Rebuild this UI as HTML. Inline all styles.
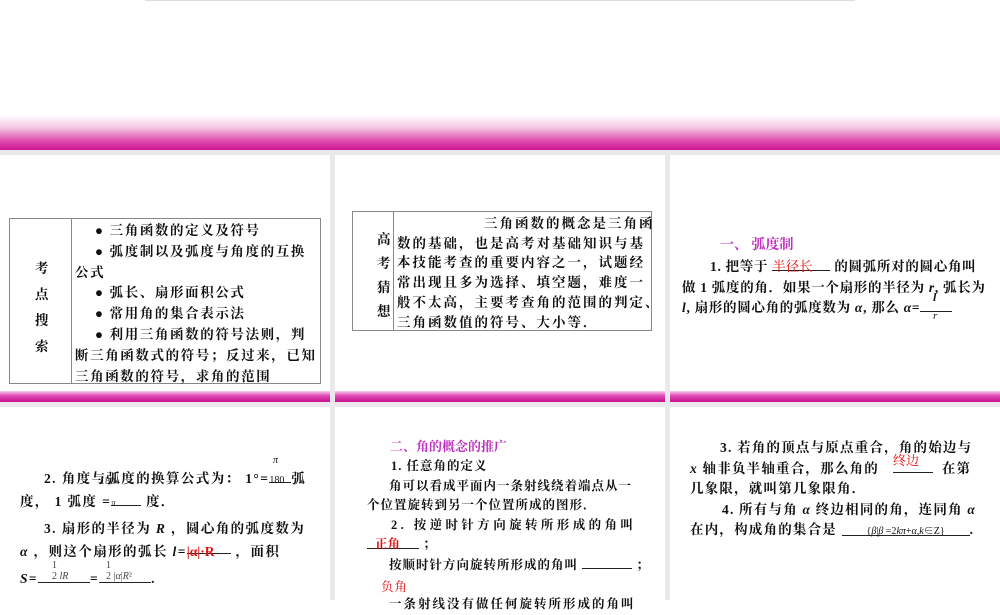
<!DOCTYPE html>
<html><head><meta charset="utf-8"><style>
*{margin:0;padding:0;box-sizing:border-box}
body{width:1000px;height:600px;position:relative;overflow:hidden;background:#fff;font-family:"Liberation Serif","Noto Serif CJK SC",serif;color:#111}
.a{position:absolute;white-space:nowrap}
.t{font-size:13.5px}
.b{font-weight:bold}
.r{color:#e01010}
.m{color:#c030c0;font-weight:bold}
.u{display:inline-block;border-bottom:1px solid #222;height:14px;vertical-align:baseline;letter-spacing:0}
</style></head><body>
<div class="a" style="left:145px;top:0;width:710px;height:1px;background:#ddd"></div>
<div class="a" style="left:0;top:115px;width:1000px;height:36px;background:linear-gradient(#fff,#f4c8e4 35%,#e050b0 70%,#c8108e)"></div>
<div class="a" style="left:0;top:150px;width:1000px;height:5px;background:#ebe8eb"></div>
<div class="a" style="left:0;top:391px;width:1000px;height:11px;background:linear-gradient(#f8d0ec,#e050b8 40%,#c8108e)"></div>
<div class="a" style="left:0;top:402px;width:1000px;height:5px;background:#ebe8eb"></div>
<div class="a" style="left:330px;top:155px;width:5px;height:445px;background:#ebe8eb"></div>
<div class="a" style="left:665px;top:155px;width:5px;height:445px;background:#ebe8eb"></div>

<!-- panel 1 -->
<div class="a" style="left:9px;top:218px;width:312px;height:166px;border:1px solid #888"></div>
<div class="a" style="left:71px;top:218px;width:1px;height:166px;background:#888"></div>
<div class="a t b" style="left:35px;top:256px;line-height:26px;white-space:normal;width:16px">考<br>点<br>搜<br>索</div>
<div class="a t" style="left:75px;top:221px;line-height:20.8px;letter-spacing:1.6px;font-weight:bold">
<div>&nbsp;&nbsp;&nbsp;&nbsp;● 三角函数的定义及符号</div>
<div>&nbsp;&nbsp;&nbsp;&nbsp;● 弧度制以及弧度与角度的互换</div>
<div>公式</div>
<div>&nbsp;&nbsp;&nbsp;&nbsp;● 弧长、扇形面积公式</div>
<div>&nbsp;&nbsp;&nbsp;&nbsp;● 常用角的集合表示法</div>
<div>&nbsp;&nbsp;&nbsp;&nbsp;● 利用三角函数的符号法则，判</div>
<div>断三角函数式的符号；反过来，已知</div>
<div>三角函数的符号，求角的范围</div>
</div>

<!-- panel 2 -->
<div class="a" style="left:352px;top:211px;width:300px;height:120px;border:1px solid #888"></div>
<div class="a" style="left:393px;top:211px;width:1px;height:120px;background:#888"></div>
<div class="a t b" style="left:377px;top:228px;line-height:24px;white-space:normal;width:16px">高<br>考<br>猜<br>想</div>
<div class="a t b" style="left:397px;top:214px;line-height:19.7px;letter-spacing:2px">
<div style="padding-left:87px">三角函数的概念是三角函</div>
<div>数的基础，也是高考对基础知识与基</div>
<div>本技能考查的重要内容之一，试题经</div>
<div>常出现且多为选择、填空题，难度一</div>
<div>般不太高，主要考查角的范围的判定、</div>
<div>三角函数值的符号、大小等．</div>
</div>

<!-- panel 3 -->
<div class="a m" style="left:720px;top:234px;font-size:14px">一、 弧度制</div>
<div class="a t b" style="left:682px;top:257px;line-height:20.5px;letter-spacing:0.7px">
<div style="padding-left:28px">1. 把等于 <span class="u r" style="width:58px;font-weight:normal">半径长</span> 的圆弧所对的圆心角叫</div>
<div>做 1 弧度的角．如果一个扇形的半径为 <i>r</i>, 弧长为</div>
<div><i>l</i>, 扇形的圆心角的弧度数为 <i>α</i>, 那么 <i>α</i>=<span class="u" style="width:32px"></span></div>
</div>
<div class="a" style="left:933px;top:290px;font-size:12px;font-style:italic;font-weight:bold">l</div>
<div class="a" style="left:933px;top:310px;font-size:11px;font-style:italic">r</div>

<!-- panel 4 -->
<div class="a" style="left:273px;top:455px;font-size:10px;font-style:italic">π</div>
<div class="a" style="left:100px;top:476px;font-size:10px;color:#444">180</div>
<div class="a t b" style="left:20px;top:467px;line-height:23px;letter-spacing:1.4px">
<div style="padding-left:24px">2. 角度与弧度的换算公式为： 1°=<span class="u" style="width:22px;font-weight:normal;font-size:10px">180</span>弧</div>
<div>度， 1 弧度 =<span class="u" style="width:30px;font-weight:normal;font-size:9px"><i>π</i></span> 度．</div>
<div style="margin-top:4px;padding-left:24px">3. 扇形的半径为 <i>R</i> ，圆心角的弧度数为</div>
<div><i>α</i> ，则这个扇形的弧长 <i>l</i>=<span class="u r" style="width:44px">|α|·R</span> ，面积</div>
<div style="margin-top:4px"><i>S</i>=<span class="u" style="width:52px"></span>=<span class="u" style="width:52px"></span>.</div>
</div>
<div class="a" style="left:52px;top:560px;font-size:10px;color:#444;line-height:11px">1<br>2 <i>lR</i></div>
<div class="a" style="left:106px;top:560px;font-size:10px;color:#444;line-height:11px">1<br>2 |<i>α</i>|<i>R</i>²</div>

<!-- panel 5 -->
<div class="a m" style="left:390px;top:436px;font-size:13px">二、角的概念的推广</div>
<div class="a" style="left:367px;top:457px;font-size:12.5px;line-height:19.6px;font-weight:bold;letter-spacing:1px">
<div style="padding-left:24px">1. 任意角的定义</div>
<div style="padding-left:22px">角可以看成平面内一条射线绕着端点从一</div>
<div>个位置旋转到另一个位置所成的图形．</div>
<div style="padding-left:24px;letter-spacing:3.4px">2. 按逆时针方向旋转所形成的角叫</div>
<div><span class="u r" style="width:52px;padding-left:8px">正角</span> ；</div>
<div style="padding-left:22px">按顺时针方向旋转所形成的角叫 <span class="u" style="width:50px"></span> ；</div>
<div class="r" style="font-weight:normal;padding-left:14px;margin-top:2px">负角</div>
<div style="padding-left:22px;margin-top:-2px;letter-spacing:2px">一条射线没有做任何旋转所形成的角叫</div>
</div>

<!-- panel 6 -->
<div class="a r" style="left:893px;top:450px;font-size:13px">终边</div>
<div class="a t b" style="left:690px;top:438px;line-height:20.5px;letter-spacing:1.2px">
<div style="padding-left:30px">3. 若角的顶点与原点重合，角的始边与</div>
<div><i>x</i> 轴非负半轴重合，那么角的 &nbsp;&nbsp;<span class="u" style="width:40px"></span>&nbsp; 在第</div>
<div>几象限，就叫第几象限角．</div>
<div style="padding-left:32px">4. 所有与角 <i>α</i> 终边相同的角，连同角 <i>α</i></div>
<div>在内，构成角的集合是 <span class="u" style="width:128px;font-weight:normal;font-size:10px;text-align:center">{<i>β</i>|<i>β</i> =2<i>kπ</i>+<i>α</i>,<i>k</i>∈Z}</span>.</div>
</div>
</body></html>
